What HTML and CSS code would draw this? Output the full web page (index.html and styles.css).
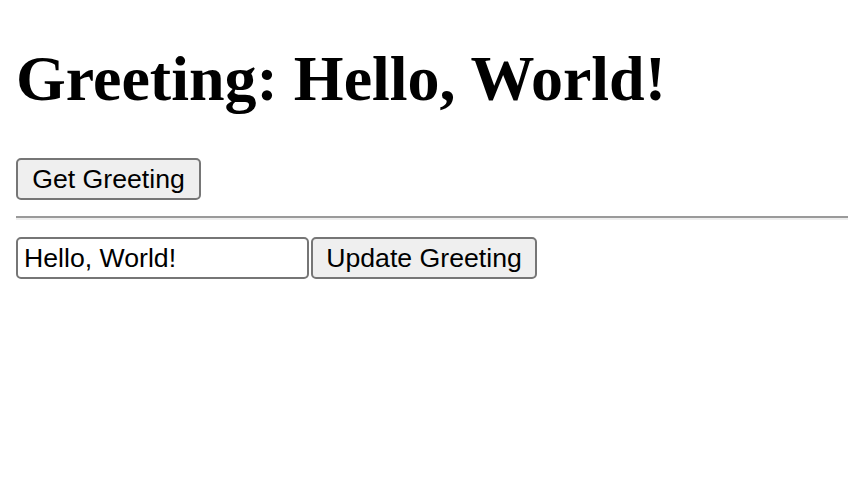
FILE: index.html
```html
<!DOCTYPE html>
<html lang="en">
<head>
<meta charset="utf-8">
<title>Greeting</title>
<link rel="stylesheet" href="styles.css">
</head>
<body>
<main class="page">
  <h1 class="title">Greeting: Hello, World!</h1>
  <div class="row">
    <button class="btn btn-get" type="button">Get Greeting</button>
  </div>
  <hr class="rule">
  <div class="row">
    <input class="field" type="text" value="Hello, World!"><button class="btn btn-update" type="button">Update Greeting</button>
  </div>
</main>
</body>
</html>
```

FILE: styles.css
```css
html, body {
  margin: 0;
  padding: 0;
  background: #ffffff;
}

.page {
  padding: 42px 0 0 16px;
}

.title {
  margin: 0 0 42px 0;
  font-family: "Liberation Serif", "Times New Roman", serif;
  font-weight: bold;
  font-size: 64px;
  line-height: 74px;
  color: #000;
}

.row {
  display: flex;
  align-items: center;
  gap: 2px;
}

.btn {
  box-sizing: border-box;
  height: 42px;
  padding: 0;
  border: 2px solid #767676;
  border-radius: 5px;
  background: #efefef;
  color: #000;
  font-family: "Liberation Sans", Arial, sans-serif;
  font-size: 26.67px;
  text-align: center;
}

.btn-get {
  width: 185px;
}

.btn-update {
  width: 226px;
}

.field {
  box-sizing: border-box;
  width: 293px;
  height: 42px;
  margin: 0;
  padding: 0 6px;
  border: 2px solid #767676;
  border-radius: 5px;
  background: #fff;
  color: #000;
  font-family: "Liberation Sans", Arial, sans-serif;
  font-size: 26.67px;
}

.rule {
  margin: 16px 0 17px 0;
  height: 0;
  border: 0;
  border-top: 2px solid #9a9a9a;
  border-bottom: 2px solid #eeeeee;
}
```
